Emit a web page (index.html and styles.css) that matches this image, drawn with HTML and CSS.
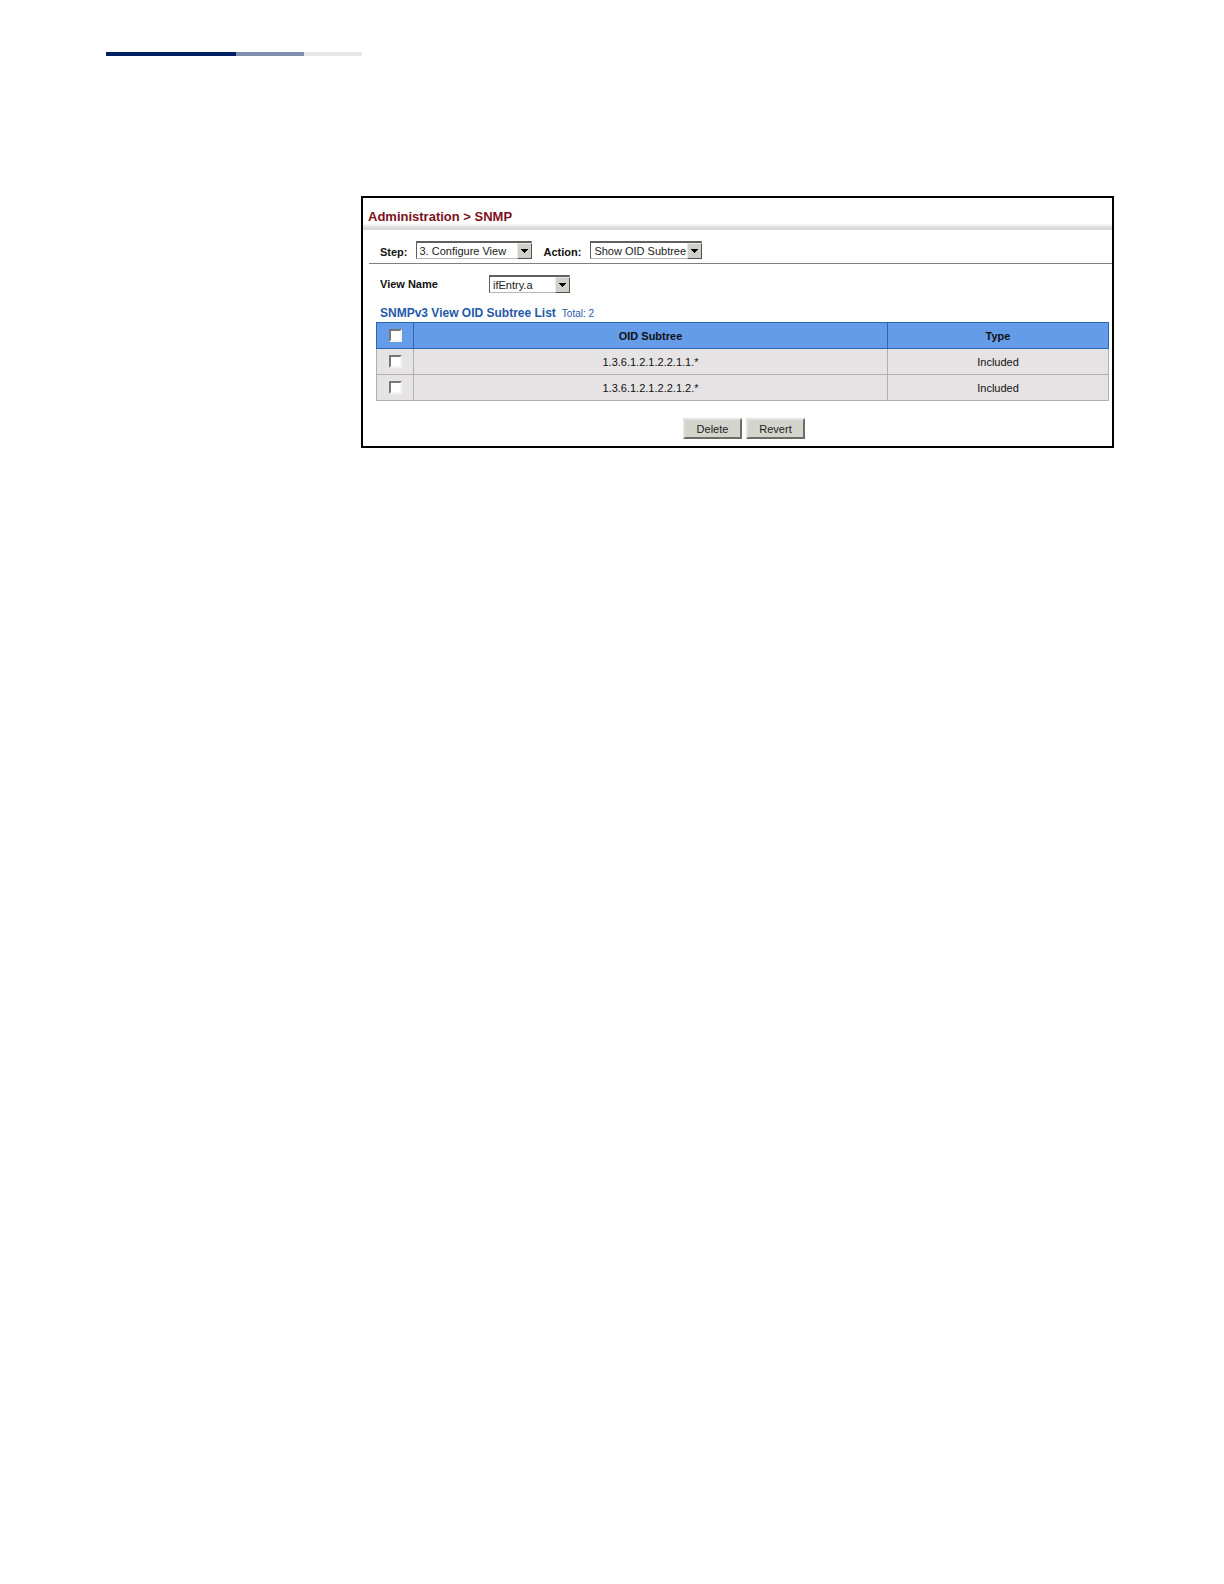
FILE: index.html
```html
<!DOCTYPE html>
<html lang="en">
<head>
<meta charset="utf-8">
<title>Administration &gt; SNMP</title>
<link rel="stylesheet" href="styles.css">
</head>
<body>
<header class="rule"><span class="rule-dark"></span><span class="rule-mid"></span><span class="rule-light"></span></header>
<main class="panel">
  <h1 class="title">Administration &gt; SNMP</h1>
  <form>
    <div class="steps">
      <label for="step">Step:</label>
      <span class="picker picker-step">
        <select id="step"><option>3. Configure View</option></select>
        <svg class="arrow" viewBox="0 0 13 14" aria-hidden="true"><path d="M3 5h7v1h-1v1h-1v1h-1v1h-1v-1h-1v-1h-1v-1h-1z"/></svg>
      </span>
      <label for="action">Action:</label>
      <span class="picker picker-action">
        <select id="action"><option>Show OID Subtree</option></select>
        <svg class="arrow" viewBox="0 0 13 14" aria-hidden="true"><path d="M3 5h7v1h-1v1h-1v1h-1v1h-1v-1h-1v-1h-1v-1h-1z"/></svg>
      </span>
    </div>
    <div class="view">
      <label for="view">View Name</label>
      <span class="picker picker-view">
        <select id="view"><option>ifEntry.a</option></select>
        <svg class="arrow" viewBox="0 0 13 14" aria-hidden="true"><path d="M3 5h7v1h-1v1h-1v1h-1v1h-1v-1h-1v-1h-1v-1h-1z"/></svg>
      </span>
    </div>
    <div class="list-head"><h2>SNMPv3 View OID Subtree List</h2><span>Total: 2</span></div>
    <table class="list">
      <colgroup><col class="col-check"><col><col class="col-type"></colgroup>
      <thead>
        <tr><th><input type="checkbox" aria-label="Select all"></th><th>OID Subtree</th><th>Type</th></tr>
      </thead>
      <tbody>
        <tr><td><input type="checkbox" aria-label="Select 1.3.6.1.2.1.2.2.1.1.*"></td><td>1.3.6.1.2.1.2.2.1.1.*</td><td>Included</td></tr>
        <tr><td><input type="checkbox" aria-label="Select 1.3.6.1.2.1.2.2.1.2.*"></td><td>1.3.6.1.2.1.2.2.1.2.*</td><td>Included</td></tr>
      </tbody>
    </table>
    <div class="buttons"><button type="button">Delete</button><button type="reset">Revert</button></div>
  </form>
</main>
</body>
</html>
```
FILE: styles.css
```css
* { box-sizing: border-box; }

body {
  margin: 0;
  padding: 52px 110px 52px 106px;
  background: #fff;
  color: #111;
  font-family: "Liberation Sans", Arial, sans-serif;
  font-size: 11px;
}

.rule { display: flex; height: 4px; }
.rule-dark { width: 130px; background: #001f60; }
.rule-mid { width: 68px; background: #808fb0; }
.rule-light { width: 58px; background: #e6e8ec; }

.panel {
  margin: 140px 0 0 255px;
  border: 2px solid #000;
}

.title {
  margin: 0;
  padding: 11px 5px 5px;
  background: linear-gradient(to top, #d8d8d8 2px, #f0f0f0 5px, #fff 6px);
  color: #7c1020;
  font-size: 13px;
  line-height: 16px;
}

label { font-size: 11px; font-weight: bold; }

.steps {
  display: flex;
  align-items: flex-end;
  height: 34px;
  margin-left: 6px;
  padding: 0 0 4px 11px;
  border-bottom: 1px solid #808080;
}
.steps label { line-height: 14px; }

.picker { display: inline-grid; height: 18px; }
.picker-step { width: 116px; margin: 0 12px 0 8px; }
.picker-action { width: 112px; margin-left: 9px; }
.picker-view { width: 81px; }

select {
  grid-area: 1 / 1;
  width: 100%;
  height: 18px;
  padding: 0 0 0 3px;
  appearance: none;
  border: 1px solid;
  border-color: #606060 #b8b8b8 #b8b8b8 #606060;
  border-top-width: 2px;
  border-radius: 0;
  background: #fff;
  color: #222;
  font: 11px "Liberation Sans", Arial, sans-serif;
}

.arrow {
  grid-area: 1 / 1;
  place-self: end;
  width: 15px;
  height: 16px;
  border: 1px solid;
  border-color: #e8e8e4 #505050 #505050 #e8e8e4;
  background: #d0d0ca;
  pointer-events: none;
}

.view {
  display: grid;
  grid-template-columns: 109px auto;
  align-items: center;
  justify-content: start;
  height: 40px;
  padding-left: 17px;
}

.list-head {
  display: flex;
  align-items: baseline;
  gap: 6px;
  height: 18px;
  padding-left: 17px;
  color: #2459a9;
  line-height: 18px;
}
.list-head h2 { margin: 0; font-size: 12px; }
.list-head span { font-size: 10px; }

.list {
  width: calc(100% - 16px);
  margin: 0 3px 0 13px;
  border-collapse: collapse;
  table-layout: fixed;
}
.col-check { width: 37px; }
.col-type { width: 221px; }
.list th, .list td {
  height: 26px;
  padding: 0;
  border: 1px solid #b0afb2;
  background: #e5e3e3;
  text-align: center;
}
.list th {
  border-color: #2c66b4;
  background: #649ce8;
}

input {
  display: block;
  width: 13px;
  height: 13px;
  margin: 0 auto;
  appearance: none;
  border: 2px solid;
  border-color: #777 #f4f4f0 #f4f4f0 #777;
  background: #fff;
}

.buttons {
  display: flex;
  justify-content: center;
  gap: 4px;
  padding: 17px 0 7px 13px;
}
button {
  width: 59px;
  height: 21px;
  padding: 0;
  border: 2px solid;
  border-color: #e4e4de #6c6c68 #6c6c68 #e4e4de;
  background: #d3d4cc;
  color: #222;
  font: 11px "Liberation Sans", Arial, sans-serif;
}
```
